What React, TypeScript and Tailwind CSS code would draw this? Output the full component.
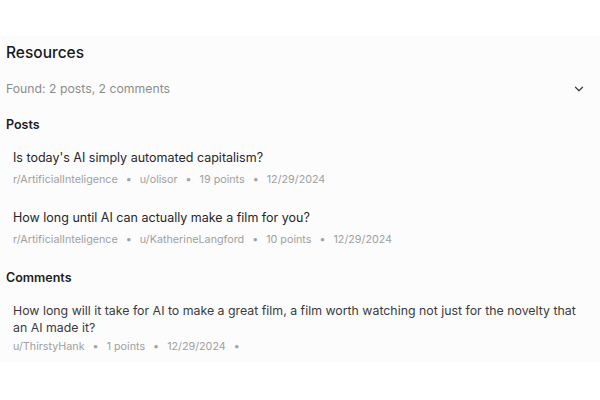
import { ChevronDown } from "lucide-react";

type Post = {
  title: string;
  sub: string;
  user: string;
  points: number;
  date: string;
};

const posts: Post[] = [
  { title: "Is today's AI simply automated capitalism?", sub: "r/ArtificialInteligence", user: "u/olisor", points: 19, date: "12/29/2024" },
  { title: "How long until AI can actually make a film for you?", sub: "r/ArtificialInteligence", user: "u/KatherineLangford", points: 10, date: "12/29/2024" },
];

const Dot = () => <span className="mx-[8px] text-[#a3a3a3]">•</span>;

export default function App() {
  return (
    <div className="w-[600px] h-[400px] bg-white" style={{ fontFamily: "Inter, 'Noto Sans', sans-serif" }}>
      <div className="h-[36px]" />
      <section className="bg-[#fcfcfc] px-[6px] pt-[5px] pb-[7px]">
        <h2 className="text-[15.5px] leading-[24px] font-medium text-[#18181b]">Resources</h2>

        <div className="mt-[12px] h-[24px] flex items-center justify-between">
          <span className="text-[12.25px] text-[#8c8c8c]">Found: 2 posts, 2 comments</span>
          <ChevronDown className="w-[14px] h-[14px] mr-[8px] text-[#3f3f46]" strokeWidth={2.25} />
        </div>

        <h3 className="mt-[14px] text-[12.5px] leading-[20px] font-semibold text-[#1c1c1f]">Posts</h3>

        <ul className="mt-[13px] flex flex-col gap-[20px] pl-[7px]">
          {posts.map((p) => (
            <li key={p.title}>
              <p className="text-[12.5px] leading-[20px] text-[#27272a]">{p.title}</p>
              <p className="mt-[4px] text-[10.75px] leading-[16px] text-[#a0a0a0]">
                {p.sub}
                <Dot />
                {p.user}
                <Dot />
                {p.points} points
                <Dot />
                {p.date}
              </p>
            </li>
          ))}
        </ul>

        <h3 className="mt-[20px] text-[12.5px] leading-[20px] font-semibold text-[#1c1c1f]">Comments</h3>

        <div className="mt-[14px] pl-[7px] pr-[10px]">
          <p className="text-[12.35px] leading-[17px] text-[#3a3a40]">
            How long will it take for AI to make a great film, a film worth watching not just for the novelty that an AI made it?
          </p>
          <p className="mt-[3px] text-[10.75px] leading-[16px] text-[#a0a0a0]">
            u/ThirstyHank
            <Dot />
            1 points
            <Dot />
            12/29/2024
            <Dot />
          </p>
        </div>
      </section>
    </div>
  );
}
